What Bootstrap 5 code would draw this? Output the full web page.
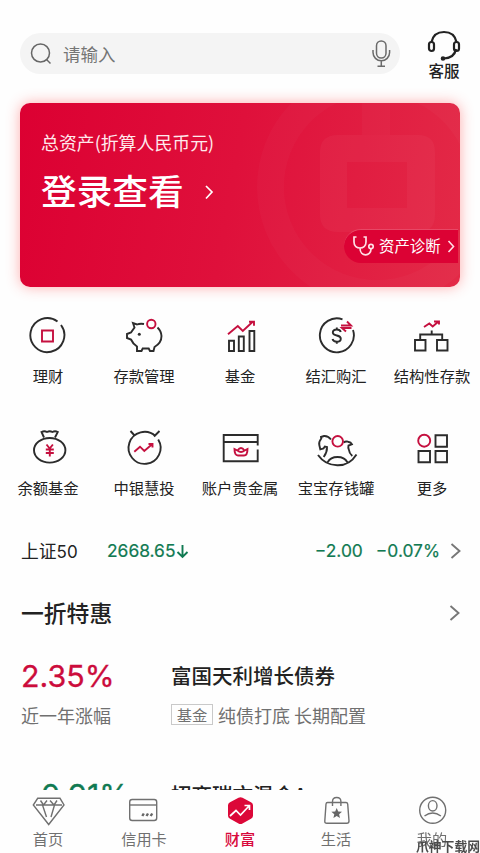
<!DOCTYPE html>
<html lang="zh-CN">
<head>
<meta charset="utf-8">
<meta name="viewport" content="width=device-width, initial-scale=1">
<title>财富</title>
<link href="https://cdn.jsdelivr.net/npm/bootstrap@5.3.0/dist/css/bootstrap.min.css" rel="stylesheet">
<style>
html,body{height:853px;overflow:hidden}
body{width:480px;background:#fefefe;color:#222;font-family:Inter,"Noto Sans CJK SC",sans-serif;line-height:1}
.cjk{font-family:"Noto Sans CJK SC",sans-serif}
svg{display:block;fill:none;flex:none}
.topbar{height:103px;padding:30px 0 0 20px}
.search{width:380px;height:41px;margin-top:3px;background:#f4f4f4;padding:0 9px 0 10px;color:#757575;font-size:17.5px}
.search-hint{margin-left:9px}
.search-mic{margin-bottom:2px}
.service{width:88px;font-size:15.5px;font-weight:500}
.asset{width:440px;height:184px;margin-left:20px;border-radius:10px;background:linear-gradient(100deg,#dc0032 0%,#df103b 48%,#e32a47 100%);box-shadow:0 0 14px rgba(255,60,60,.42);color:#fff}
.asset-deco{position:absolute;inset:0}
.asset-text{padding:29px 0 0 21px}
.asset-sub{font-size:17.9px;line-height:20px;color:#ffe9ec}
.asset-main{font-size:35.7px;line-height:44px;font-weight:500;margin-top:16px}
.asset-go{margin-left:21px;margin-top:3px}
.diagnose{position:absolute;left:324px;top:126px;width:114px;height:34px;border-radius:17px 0 0 17px;background:#dc0234;font-size:15.4px;border-top:1px solid #e84866;padding:0 0 2px 8px}
.menu{width:480px;margin-top:29px}
.menu-cell{width:96px;height:112px;font-size:15.3px;white-space:nowrap}
.menu-cell span{margin-top:11px;line-height:16px}
.ink{stroke:#2c2c2c;stroke-width:1.9}
.red{stroke:#c5103f;stroke-width:1.9}
.index-row{height:34px;margin-top:-6px;padding:0 19px 0 21px;font-size:17.8px}
.index-name{width:86px}
.index-digits{font-family:Inter,sans-serif;font-size:17px}
.index-pct{margin-left:13px}
.index-go{margin-left:10px}
.green{color:#117a52}
.num{font-size:17.4px;-webkit-text-stroke:.2px}
.section-row{height:40px;margin-top:25px;padding:0 20px 0 21px;font-size:22.8px;font-weight:500}
.fund-list{height:157px;padding-top:25px;overflow:hidden}
.fund{height:119px;padding-left:21px}
.fund-rate{width:150px}
.rate{font-size:30.4px;line-height:36px;-webkit-text-stroke:.3px}
.rate-red{color:#cc0c3c}
.fund-name{font-size:20.5px;line-height:35px;font-weight:500}
.fund-note{font-size:18px;line-height:22px;color:#707070;margin-top:10px;white-space:nowrap}
.fund-name + .fund-note{margin-top:11px}
.fund-tag{display:block;width:42px;height:21px;border:1px solid #c9c9c9;font-size:15.3px;line-height:19px;text-align:center;margin-right:5px}
.tabs{height:63px;width:480px;background:#fefefe;padding-top:5px}
.tab-cell{width:96px;color:#707070;font-size:15.2px}
.tab-cell span{line-height:16px;margin-top:3px}
.tab-ink{stroke:#707070;stroke-width:1.4}
.active-tab{color:#d8093c}
.corner{position:absolute;right:0;bottom:0;font-size:12.8px;line-height:15px;font-weight:700;color:#4b4b4b}
</style>
<script src="https://cdn.jsdelivr.net/npm/bootstrap@5.3.0/dist/js/bootstrap.bundle.min.js"></script>
</head>
<body class="position-relative">
<header class="topbar d-flex align-items-start">
  <div class="search rounded-pill d-flex align-items-center flex-shrink-0">
    <svg width="24" height="24" stroke="#666" stroke-width="1.5"><circle cx="10.500" cy="11" r="9"/><path d="M16.500 17.500l4 4"/></svg>
    <span class="search-hint cjk flex-grow-1">请输入</span>
    <svg class="search-mic" width="20" height="30" stroke="#6a6a6a" stroke-width="1.5"><rect x="5.500" y="3" width="9.500" height="17" rx="4.700"/><path d="M2 12v2.500a8.300 8.300 0 0 0 16.600 0V12M10.300 23v5M6.500 28.300h7.500"/></svg>
  </div>
  <div class="service cjk d-flex flex-column align-items-center flex-shrink-0">
    <svg width="34" height="33" stroke="#222" stroke-width="2.200"><path d="M4.500 12C6 5 11 2 17 2S28 5 29.500 12M29 19c-1 6-5 9-12 9.500"/><rect x="2" y="12" width="5" height="9" rx="2.500"/><rect x="27" y="12" width="5" height="9" rx="2.500"/><circle cx="16" cy="28.500" r="1.200"/></svg>
    <span>客服</span>
  </div>
</header>

<section class="asset position-relative">
  <svg class="asset-deco" width="440" height="184" viewBox="0 0 440 184">
    <defs><clipPath id="panel"><rect width="440" height="184" rx="10"/></clipPath></defs>
    <g clip-path="url(#panel)">
      <circle cx="357" cy="84" r="106.500" stroke="#fff" stroke-opacity=".022" stroke-width="27"/>
      <path d="M342 0h28v32h-28z" fill="#fff" fill-opacity=".022"/>
      <path fill-rule="evenodd" fill="#fff" fill-opacity=".035" d="M318 32h80q17 0 17 17v63q0 17-17 17h-80q-18 0-18-17V49q0-17 18-17zM327 59v46h60V59z"/>
    </g>
  </svg>
  <div class="asset-text position-relative cjk">
    <div class="asset-sub">总资产(折算人民币元)</div>
    <div class="asset-main d-flex align-items-center"><span>登录查看</span>
      <svg class="asset-go" width="10" height="16" stroke="#fff" stroke-width="1.700"><path d="M1 2l6 6-6 6.500"/></svg></div>
  </div>
  <div class="diagnose cjk d-flex align-items-center">
    <svg width="23" height="22" stroke="#ffdfe5" stroke-width="1.700"><path d="M4.500 2H2v5c0 8 12 8 12 0V2h-2.500M8 13c0 9 11 9 11 1"/><circle cx="19" cy="11.500" r="2.200"/></svg>
    <span class="ms-1">资产诊断</span>
    <svg class="ms-1" width="12" height="16" stroke="#ffdfe5" stroke-width="1.600"><path d="M3.500 3l5 5.500-5 5.500"/></svg>
  </div>
</section>

<nav class="menu cjk d-flex flex-wrap">
  <div class="menu-cell d-flex flex-column align-items-center">
    <svg width="40" height="40"><path class="ink" d="M29.500 5.500A17 17 0 1 0 33 9"/><path class="red" d="M14 14.500h11v11H14z"/></svg><span>理财</span></div>
  <div class="menu-cell d-flex flex-column align-items-center">
    <svg width="40" height="40"><path class="ink" d="M20 8q-4-.8-7 .5L9 7l1.500 4.500L7 16.500l-4 1.500v4l4 1.500q2 4.500 6 7V35h4.500l1.200-2.500h6L26 35h3.500l1-4q7-4 7-11-.3-5-4-8.500"/><circle class="red" cx="27.300" cy="8" r="4.200"/><circle cx="15.300" cy="18.300" r="1.500" fill="#2c2c2c"/></svg><span>存款管理</span></div>
  <div class="menu-cell d-flex flex-column align-items-center">
    <svg width="40" height="40"><path class="ink" d="M9 24.800h5V35H9zM18.800 20.500h5V35h-5zM29.500 15h4.800v20h-4.800z"/><path class="red" d="M8 18.300l9.800-8.300 5 5L33 5.500M29 5.800h5v4"/></svg><span>基金</span></div>
  <div class="menu-cell d-flex flex-column align-items-center">
    <svg width="40" height="40"><path class="ink" d="M26.500 3.300A17 17 0 1 0 37 14M24.800 16q-.8-2.500-4-2.500-4 0-4 3 0 2.200 4 3t4 3.200q0 3-4 3-3.500 0-4.300-2.700M20.800 11.500v2M20.800 25.700v2"/><path class="red" d="M25 9.500h10l-4-4M35.500 12H26l4 3.500"/></svg><span>结汇购汇</span></div>
  <div class="menu-cell d-flex flex-column align-items-center">
    <svg width="40" height="40"><path class="ink" d="M3 24h10.500v10.500H3zM25 24h10.500v10.500H25zM8.200 24v-5.500h22V24M19.700 18.500v-4"/><path class="red" d="M12 11l5.300-3.500 3.400 3L26.500 5.500M22 5.500h5v3"/></svg><span>结构性存款</span></div>
  <div class="menu-cell d-flex flex-column align-items-center">
    <svg width="40" height="40"><ellipse class="ink" cx="21.700" cy="22.300" rx="15.700" ry="12.300"/><path class="ink" d="M16 9.500L13.500 4q3-1.500 5.500 0 2.700-1.500 5.400 0 2.600-1.500 5.400 0L27 9.500"/><path class="red" d="M18.500 16.500l3.200 4 3.200-4M17.800 21.500h8M17.800 25h8M21.800 20.500v8"/></svg><span>余额基金</span></div>
  <div class="menu-cell d-flex flex-column align-items-center">
    <svg width="40" height="40"><path class="ink" d="M31.500 8.200A16 16 0 1 0 34.200 11.500M6.500 3l4.500 5M35.500 3L30 8.500"/><path class="red" d="M10.300 23.700l5.700-5 4.300 4.300 7.500-6.500M24.500 16h4v3.500"/></svg><span>中银慧投</span></div>
  <div class="menu-cell d-flex flex-column align-items-center">
    <svg width="40" height="40"><path class="ink" d="M37.700 17.500V7h-34v26.200h34V21.500M4 14h33.500"/><path class="red" d="M14.500 21l3 1.500q3.500-5 7 0l3-1.500q0 6.500-3.500 6.500h-6q-3.500 0-3.500-6.500zM17.500 22.500q3.500 3 7 0"/></svg><span>账户贵金属</span></div>
  <div class="menu-cell d-flex flex-column align-items-center">
    <svg width="44" height="40" viewBox="-2 0 44 40"><path class="ink" d="M15 11.500q-3-3.800-7-3.500L5 9l.3 1.500Q2.500 14 3.300 17l1 4.300 3.200-.8 1.300-2 2.200.5q.3 5-3.300 10M27.500 14.500q2-1.500 4.500-.8 3 .3 4 2.600l-3.500 1.200q-.5 2 .3 4 .5 4 3.500 6.500M2 27q7 10 19.300 10.300T40.500 26.500M11.500 34.500q3-5.500 10-5.500t10 5.500"/><circle class="red" cx="21.700" cy="13.300" r="5.300"/></svg><span>宝宝存钱罐</span></div>
  <div class="menu-cell d-flex flex-column align-items-center">
    <svg width="40" height="40"><circle class="red" cx="12.200" cy="12.700" r="6"/><path class="ink" d="M23.500 7.200H35v11.500H23.500zM6.500 23H18v11.300H6.500zM23.500 23H35v11.300H23.500z"/></svg><span>更多</span></div>
</nav>

<section class="index-row d-flex align-items-center">
  <span class="index-name cjk">上证<span class="index-digits">50</span></span>
  <span class="green num">2668.65</span>
  <svg width="15" height="18" stroke="#117a52" stroke-width="1.900"><path d="M7.500 3v12M2.500 10l5 5 5-5"/></svg>
  <span class="green num ms-auto">−2.00</span>
  <span class="index-pct green num">−0.07%</span>
  <svg class="index-go" width="11" height="18" stroke="#777" stroke-width="1.900"><path d="M1.500 2l8 7-8 7"/></svg>
</section>

<section class="section-row cjk d-flex align-items-center justify-content-between">
  <span>一折特惠</span>
  <svg width="11" height="18" stroke="#777" stroke-width="1.900"><path d="M1.500 2l8 7-8 7"/></svg>
</section>

<section class="fund-list">
  <div class="fund d-flex">
    <div class="fund-rate"><div class="rate rate-red">2.35%</div><div class="fund-note cjk">近一年涨幅</div></div>
    <div class="cjk"><div class="fund-name">富国天利增长债券</div><div class="fund-note d-flex"><span class="fund-tag">基金</span>纯债打底 长期配置</div></div>
  </div>
  <div class="fund d-flex">
    <div class="fund-rate"><div class="rate green">−0.91%</div></div>
    <div class="cjk"><div class="fund-name">招商瑞文混合A</div></div>
  </div>
</section>

<nav class="tabs cjk position-fixed bottom-0 start-0 d-flex">
  <div class="tab-cell d-flex flex-column align-items-center">
    <svg width="40" height="32"><path class="tab-ink" d="M9.700 3.300H32l4 6.700-15.300 19.500L5.300 10zM8 10h26M12.500 5.500l3 4.500 3.500-4.500M22 5.500l4 4.500 3-4.500M14.500 10l4 12M26.500 10l-3.500 12"/></svg><span>首页</span></div>
  <div class="tab-cell d-flex flex-column align-items-center">
    <svg width="40" height="32"><rect class="tab-ink" x="5.700" y="4.500" width="27" height="21" rx="2.500"/><path class="tab-ink" d="M6 10h26.500"/><path d="M18.300 21l1.500-2.500M22.500 21l1.500-2.500M26.700 21l1.500-2.500" stroke="#666" stroke-width="2.400"/></svg><span>信用卡</span></div>
  <div class="tab-cell active-tab d-flex flex-column align-items-center">
    <svg width="40" height="32"><path d="M18.500 2.800q2-1.200 4 0l8.500 4.500q2 1.100 2 3v10.500q0 2-2 3L22.500 28.500q-2 1-4 0L10 23.800q-2-1-2-3V10.300q0-2 2-3z" fill="#dc0838"/><path d="M10 21l6-5.500 4.500 4.500L29 11M24.500 10.500h5V15" stroke="#fff" stroke-width="1.700"/></svg><span class="fw-medium">财富</span></div>
  <div class="tab-cell d-flex flex-column align-items-center">
    <svg width="40" height="32"><path class="tab-ink" d="M11.500 7.500H30q1.500 0 1.700 1.500l1.300 17q0 2.300-2.200 2.300H11q-2.500 0-2.200-2.300L10 9q.2-1.500 1.500-1.500zM16.500 11V6.500q0-4 4.200-4t4.200 4V11"/><path d="M20.700 13l1.500 3.400 3.800.3-2.900 2.500.9 3.700-3.300-2-3.300 2 .9-3.700-2.900-2.500 3.800-.3z" fill="#666"/></svg><span>生活</span></div>
  <div class="tab-cell d-flex flex-column align-items-center">
    <svg width="40" height="32"><circle class="tab-ink" cx="20.700" cy="15.300" r="13"/><ellipse class="tab-ink" cx="20.700" cy="10.800" rx="4.300" ry="5.200"/><path class="tab-ink" d="M12.500 21q8.200-6 16.400 0"/></svg><span>我的</span></div>
  <div class="corner">爪神下载网</div>
</nav>
</body>
</html>
